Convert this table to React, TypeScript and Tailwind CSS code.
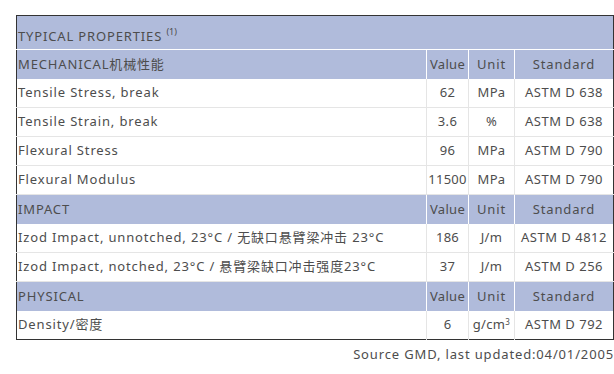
const font = { fontFamily: '"Noto Sans", "Noto Sans CJK SC", sans-serif' };

type Row = { name: string; value: string; unit: React.ReactNode; standard: string };

const sections: { title: string; rows: Row[] }[] = [
  {
    title: "MECHANICAL机械性能",
    rows: [
      { name: "Tensile Stress, break", value: "62", unit: "MPa", standard: "ASTM D 638" },
      { name: "Tensile Strain, break", value: "3.6", unit: "%", standard: "ASTM D 638" },
      { name: "Flexural Stress", value: "96", unit: "MPa", standard: "ASTM D 790" },
      { name: "Flexural Modulus", value: "11500", unit: "MPa", standard: "ASTM D 790" },
    ],
  },
  {
    title: "IMPACT",
    rows: [
      { name: "Izod Impact, unnotched, 23°C / 无缺口悬臂梁冲击 23°C", value: "186", unit: "J/m", standard: "ASTM D 4812" },
      { name: "Izod Impact, notched, 23°C / 悬臂梁缺口冲击强度23°C", value: "37", unit: "J/m", standard: "ASTM D 256" },
    ],
  },
  {
    title: "PHYSICAL",
    rows: [
      { name: "Density/密度", value: "6", unit: <>g/cm<span className="text-[8px] align-[4px]">3</span></>, standard: "ASTM D 792" },
    ],
  },
];

const headCell = "border-l border-white text-center font-normal";
const bodyCell = "border-l border-[#e5e5e5] text-center whitespace-nowrap";

export default function App() {
  return (
    <div className="w-[614px] h-[374px] bg-white pt-[15px] pl-4 text-[13px] text-[#4d4d4d] tracking-[0.85px]" style={font}>
      <table className="w-[598px] table-fixed border-collapse border border-[#333]">
        <colgroup>
          <col className="w-[410px]" />
          <col className="w-[42px]" />
          <col className="w-[46px]" />
          <col />
        </colgroup>
        <tbody>
          <tr className="h-[34px] bg-[#b0bbdb] border-b border-white">
            <td colSpan={4} className="pl-px pt-[6px]">
              TYPICAL PROPERTIES <span className="text-[9px] tracking-normal align-[6px]">(1)</span>
            </td>
          </tr>
          {sections.map(s => (
            <>
              <tr key={s.title} className="h-[29px] bg-[#b0bbdb]">
                <td className="pl-px">{s.title}</td>
                <td className={`${headCell} tracking-[0.3px]`}>Value</td>
                <td className={headCell}>Unit</td>
                <td className={headCell}>Standard</td>
              </tr>
              {s.rows.map(r => (
                <tr key={r.name} className="h-[29px] border-b border-[#e5e5e5] last:border-b-0">
                  <td className="pl-px whitespace-nowrap">{r.name}</td>
                  <td className={`${bodyCell} tracking-[0.3px]`}>{r.value}</td>
                  <td className={`${bodyCell} tracking-[0.3px]`}>{r.unit}</td>
                  <td className={`${bodyCell} tracking-[0.5px]`}>{r.standard}</td>
                </tr>
              ))}
            </>
          ))}
        </tbody>
      </table>
      <div className="w-[598px] text-right pt-[5px]">Source GMD, last updated:04/01/2005</div>
    </div>
  );
}
